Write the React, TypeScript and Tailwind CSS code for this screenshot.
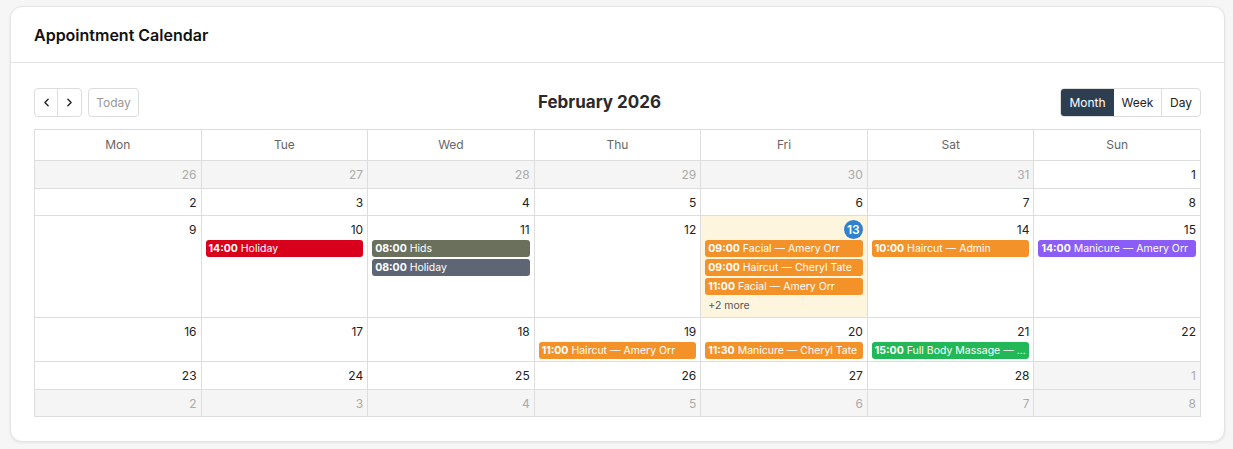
import { ChevronLeft, ChevronRight } from "lucide-react";

type Ev = { time: string; title: string; color: string };
type Day = { n: number; other?: boolean; today?: boolean; events?: Ev[]; more?: number };

const orange = "bg-[#f29228]";

const weekdays = ["Mon", "Tue", "Wed", "Thu", "Fri", "Sat", "Sun"];

const weeks: Day[][] = [
  [
    { n: 26, other: true },
    { n: 27, other: true },
    { n: 28, other: true },
    { n: 29, other: true },
    { n: 30, other: true },
    { n: 31, other: true },
    { n: 1 },
  ],
  [{ n: 2 }, { n: 3 }, { n: 4 }, { n: 5 }, { n: 6 }, { n: 7 }, { n: 8 }],
  [
    { n: 9 },
    { n: 10, events: [{ time: "14:00", title: "Holiday", color: "bg-[#d9001b]" }] },
    {
      n: 11,
      events: [
        { time: "08:00", title: "Hids", color: "bg-[#6b705c]" },
        { time: "08:00", title: "Holiday", color: "bg-[#5e6676]" },
      ],
    },
    { n: 12 },
    {
      n: 13,
      today: true,
      more: 2,
      events: [
        { time: "09:00", title: "Facial — Amery Orr", color: orange },
        { time: "09:00", title: "Haircut — Cheryl Tate", color: orange },
        { time: "11:00", title: "Facial — Amery Orr", color: orange },
      ],
    },
    { n: 14, events: [{ time: "10:00", title: "Haircut — Admin", color: orange }] },
    { n: 15, events: [{ time: "14:00", title: "Manicure — Amery Orr", color: "bg-[#8b5cf6]" }] },
  ],
  [
    { n: 16 },
    { n: 17 },
    { n: 18 },
    { n: 19, events: [{ time: "11:00", title: "Haircut — Amery Orr", color: orange }] },
    { n: 20, events: [{ time: "11:30", title: "Manicure — Cheryl Tate", color: orange }] },
    { n: 21, events: [{ time: "15:00", title: "Full Body Massage — Amery Orr", color: "bg-[#22b857]" }] },
    { n: 22 },
  ],
  [{ n: 23 }, { n: 24 }, { n: 25 }, { n: 26 }, { n: 27 }, { n: 28 }, { n: 1, other: true }],
  [
    { n: 2, other: true },
    { n: 3, other: true },
    { n: 4, other: true },
    { n: 5, other: true },
    { n: 6, other: true },
    { n: 7, other: true },
    { n: 8, other: true },
  ],
];

function DayCell({ day }: { day: Day }) {
  return (
    <div
      className={
        "flex min-h-[27.5px] flex-col border-r border-b border-[#dddddd] pb-[2px] " +
        (day.today ? "bg-[#fdf5de]" : day.other ? "bg-[#f5f5f5]" : "bg-white")
      }
    >
      <div className="flex h-6 shrink-0 items-start justify-end px-1 pt-1">
        {day.today ? (
          <span className="flex h-[19px] w-[19px] items-center justify-center rounded-full bg-[#3181cf] text-[12px] font-semibold leading-none text-white">
            {day.n}
          </span>
        ) : (
          <span
            className={
              "text-[12px] leading-[19px] " + (day.other ? "text-[#aaaaaa]" : "text-[#222222]")
            }
          >
            {day.n}
          </span>
        )}
      </div>
      {day.events && (
        <div className="flex flex-col gap-[2px] px-1">
          {day.events.map((e, i) => (
            <div
              key={i}
              className={
                "h-[17px] truncate rounded-[3px] px-[3px] text-[10.5px] leading-[17px] text-white " +
                e.color
              }
            >
              <span className="font-bold">{e.time}</span> {e.title}
            </div>
          ))}
          {day.more && (
            <div className="px-[3px] text-[10.5px] leading-[18px] text-[#555555]">+{day.more} more</div>
          )}
        </div>
      )}
    </div>
  );
}

export default function App() {
  return (
    <div
      className="min-h-screen bg-[#f6f6f6] pt-[6px] pl-[10px] pr-[8px] pb-2"
      style={{ fontFamily: "Inter, 'Liberation Sans', sans-serif" }}
    >
      <div className="rounded-xl border border-[#e4e4e4] bg-white shadow-[0_1px_3px_rgba(0,0,0,0.08)]">
        <div className="flex h-[56px] items-center border-b border-[#e2e2e2] px-[23px]">
          <h2 className="text-[16px] font-semibold text-[#111111]">Appointment Calendar</h2>
        </div>

        <div className="px-[23px] pt-[25px] pb-6">
          {/* Toolbar */}
          <div className="mb-3 flex items-center justify-between">
            <div className="flex items-center gap-[6px]">
              <div className="flex h-[29px] overflow-hidden rounded border border-[#dddddd]">
                <button className="flex w-[23px] items-center justify-center border-r border-[#dddddd] text-[#222222]">
                  <ChevronLeft size={13} strokeWidth={2.5} />
                </button>
                <button className="flex w-[23px] items-center justify-center text-[#222222]">
                  <ChevronRight size={13} strokeWidth={2.5} />
                </button>
              </div>
              <button className="h-[29px] w-[51px] rounded border border-[#dddddd] text-[12px] text-[#999999]">
                Today
              </button>
            </div>

            <h1 className="text-[17px] font-bold text-[#2a2a2a]">February 2026</h1>

            <div className="flex h-[29px] overflow-hidden rounded border border-[#dddddd] text-[12px]">
              <button className="w-[53px] bg-[#2c3e50] text-white">Month</button>
              <button className="w-[48px] border-r border-[#dddddd] text-[#222222]">Week</button>
              <button className="w-[38px] text-[#222222]">Day</button>
            </div>
          </div>

          {/* Month grid */}
          <div className="border-t border-l border-[#dddddd]">
            <div className="grid grid-cols-7">
              {weekdays.map((w) => (
                <div
                  key={w}
                  className="flex h-[31px] items-center justify-center border-r border-b border-[#dddddd] text-[12px] text-[#666666]"
                >
                  {w}
                </div>
              ))}
            </div>
            {weeks.map((week, wi) => (
              <div key={wi} className="grid grid-cols-7">
                {week.map((d, di) => (
                  <DayCell key={di} day={d} />
                ))}
              </div>
            ))}
          </div>
        </div>
      </div>
    </div>
  );
}
